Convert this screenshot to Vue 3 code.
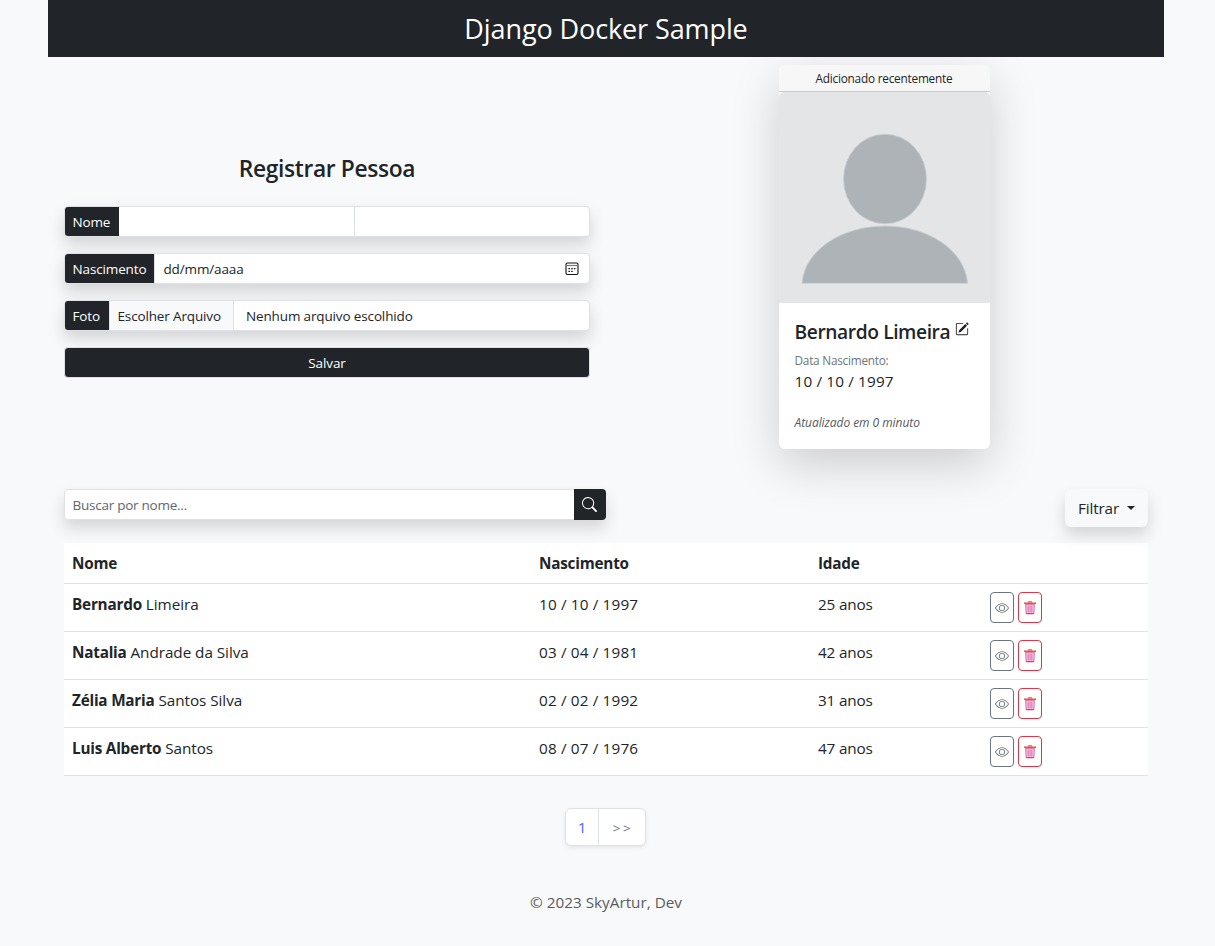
<script setup>
const people = [
  { first: 'Bernardo', last: 'Limeira', birth: '10 / 10 / 1997', age: '25 anos' },
  { first: 'Natalia', last: 'Andrade da Silva', birth: '03 / 04 / 1981', age: '42 anos' },
  { first: 'Zélia Maria', last: 'Santos Silva', birth: '02 / 02 / 1992', age: '31 anos' },
  { first: 'Luis Alberto', last: 'Santos', birth: '08 / 07 / 1976', age: '47 anos' },
]
</script>

<template>
  <div class="container">
    <header class="topbar"><span class="brand">Django Docker Sample</span></header>

    <section class="top">
      <form class="register" @submit.prevent>
        <h2>Registrar Pessoa</h2>
        <div class="group">
          <span class="tag">Nome</span>
          <span class="field half"></span>
          <span class="field half"></span>
        </div>
        <div class="group">
          <span class="tag t-birth">Nascimento</span>
          <span class="field date">
            <span>dd/mm/aaaa</span>
            <svg width="14" height="14" viewBox="0 0 14 14" fill="none" stroke="#111">
              <rect x="1" y="1" width="12" height="11.500" rx="1.500" stroke-width="1.100" />
              <path d="M1.500 3.500h11" stroke="#777" stroke-width="1.200" />
              <path d="M3.500 6.700h1.500M6.200 6.700h1.500M8.900 6.700h1.500M3.500 9.300h1.500M6.200 9.300h1.500" stroke-width="1.300" />
            </svg>
          </span>
        </div>
        <div class="group">
          <span class="tag t-photo">Foto</span>
          <span class="pick">Escolher Arquivo</span>
          <span class="field file"><span>Nenhum arquivo escolhido</span></span>
        </div>
        <button class="save">Salvar</button>
      </form>

      <div class="recent">
        <article class="card">
          <div class="card-head"><span>Adicionado recentemente</span></div>
          <div class="photo">
            <svg width="211" height="211" viewBox="0 0 211 211">
              <rect width="211" height="211" rx="5" fill="#e4e5e7" />
              <rect y="100" width="211" height="111" fill="#e4e5e7" />
              <g fill="#aeb3b7" stroke="#c9cfd2" stroke-width=".8">
                <ellipse cx="106" cy="87" rx="41.5" ry="44.8" />
                <path d="M23 191.300C25.500 158 63 134 106 134s80 24 82.500 57.300z" />
              </g>
            </svg>
          </div>
          <div class="card-body">
            <h5>
              <span>Bernardo Limeira</span>
              <svg width="14" height="14" viewBox="0 0 16 16" fill="#212529">
                <path d="M15.502 1.940a.5.5 0 0 1 0 .706L14.459 3.690l-2-2L13.502.646a.5.5 0 0 1 .707 0l1.293 1.293zm-1.750 2.456-2-2L4.939 9.210a.5.5 0 0 0-.121.196l-.805 2.414a.25.25 0 0 0 .316.316l2.414-.805a.5.5 0 0 0 .196-.120l6.813-6.814z" />
                <path d="M1 13.500A1.500 1.500 0 0 0 2.500 15h11a1.500 1.500 0 0 0 1.500-1.500v-6a.5.5 0 0 0-1 0v6a.5.5 0 0 1-.5.5h-11a.5.5 0 0 1-.5-.5v-11a.5.5 0 0 1 .5-.5H9a.5.5 0 0 0 0-1H2.500A1.500 1.500 0 0 0 1 2.500z" />
              </svg>
            </h5>
            <div class="lbl">Data Nascimento:</div>
            <div class="val">10 / 10 / 1997</div>
            <div class="upd">Atualizado em 0 minuto</div>
          </div>
        </article>
      </div>
    </section>

    <section class="tools">
      <div class="search">
        <span class="query">Buscar por nome...</span>
        <button class="go">
          <svg width="15" height="15" viewBox="0 0 16 16" fill="#fff">
            <path d="M11.742 10.344a6.500 6.500 0 1 0-1.397 1.398h-.001c.03.040.062.078.098.115l3.850 3.850a1 1 0 0 0 1.415-1.414l-3.850-3.850a1.007 1.007 0 0 0-.115-.100zM12 6.500a5.500 5.500 0 1 1-11 0 5.500 5.500 0 0 1 11 0" />
          </svg>
        </button>
      </div>
      <button class="filter"><span>Filtrar</span><i class="caret"></i></button>
    </section>

    <div class="table">
      <div class="row head"><span>Nome</span><span>Nascimento</span><span>Idade</span><span></span></div>
      <div v-for="p in people" :key="p.first" class="row">
        <span class="name"><b>{{ p.first }}</b> {{ p.last }}</span>
        <span class="num">{{ p.birth }}</span>
        <span>{{ p.age }}</span>
        <div class="acts">
          <button class="view">
            <svg width="14" height="14" viewBox="0 0 16 16" fill="#6c757d">
              <path d="M16 8s-3-5.500-8-5.500S0 8 0 8s3 5.500 8 5.500S16 8 16 8M1.173 8a13 13 0 0 1 1.660-2.043C4.120 4.668 5.880 3.500 8 3.500s3.879 1.168 5.168 2.457A13 13 0 0 1 14.828 8q-.086.130-.195.288c-.335.480-.830 1.120-1.465 1.755C11.879 11.332 10.119 12.500 8 12.500s-3.879-1.168-5.168-2.457A13 13 0 0 1 1.172 8z" />
              <path d="M8 5.500a2.500 2.500 0 1 0 0 5 2.500 2.500 0 0 0 0-5M4.500 8a3.500 3.500 0 1 1 7 0 3.500 3.500 0 0 1-7 0" />
            </svg>
          </button>
          <button class="del">
            <svg width="14" height="14" viewBox="0 0 14 14" fill="none">
              <path d="M3 4h8v8.500H3z" fill="#f3c6f0" />
              <path d="M5 .9h4" stroke="#dc3545" stroke-width="1" />
              <path d="M1 2.200h12" stroke="#dc3545" stroke-width="1.300" />
              <path d="M2.200 3.600h9.600" stroke="#e8707b" stroke-width="1" />
              <path d="M2.700 4l.5 8.600h7.600l.5-8.600" stroke="#e0688c" stroke-width="1" />
              <path d="M3.300 12.700h7.400" stroke="#dc3545" stroke-width="1" />
              <path d="M5.200 5v6.500M7 5v6.500M8.800 5v6.500" stroke="#d45aa5" stroke-width=".8" />
            </svg>
          </button>
        </div>
      </div>
    </div>

    <nav class="pager"><span class="cur">1</span><span class="next">&gt;&gt;</span></nav>
    <footer><span>© 2023 SkyArtur, Dev</span></footer>
  </div>
</template>

<style>
html, body { background: #f8f9fb; }
body { overflow: hidden; }
</style>

<style scoped>
* { box-sizing: border-box; }
.container {
  width: 1116px; height: 946px; margin-left: 48px;
  font-family: "Open Sans", "Noto Sans", sans-serif;
  font-size: 15.3px; line-height: 24px; color: #212529;
}
button { font: inherit; padding: 0; margin: 0; border: 0; }
h2, h5 { margin: 0; font-weight: 600; }
svg { display: block; flex: none; }
.topbar {
  height: 57px; background: #212529; color: #fff; position: relative; z-index: 2;
  display: flex; align-items: center; justify-content: center;
}
.brand { font-size: 27px; line-height: 42px; letter-spacing: -.1px; }
.top { display: flex; height: 424px; }
.register { width: 558px; padding: 92px 16px 0; }
h2 { font-size: 22.8px; line-height: 40px; text-align: center; margin-bottom: 17px; letter-spacing: -.35px; }
.group {
  display: flex; height: 31px; margin-bottom: 16px; border-radius: 4px; font-size: 13.5px;
  letter-spacing: -.14px;
  box-shadow: 0 8px 16px rgba(0, 0, 0, .15); background: #fff; border: 1px solid #dee2e6;
}
.tag {
  background: #212529; color: #fff; width: 54px; padding-left: 7.500px; line-height: 31px;
  border-radius: 3px 0 0 3px;
}
.t-birth { width: 89px; }
.t-photo { width: 44px; }
.field { flex: 1; display: flex; align-items: center; }
.half + .half { border-left: 1px solid #dee2e6; }
.date { padding: 0 10px 0 8.500px; justify-content: space-between; border-left: 1px solid #dee2e6; }
.pick {
  width: 125px; background: #f8f9fb; border-left: 1px solid #dee2e6; border-right: 1px solid #dee2e6;
  padding-left: 7.500px; line-height: 31px;
}
.file { padding-left: 12px; }
.save {
  display: block; width: 100%; height: 31px; background: #212529; color: #fff;
  border: 1px solid #dee2e6; border-radius: 4px; font-size: 13.5px; line-height: 31px; letter-spacing: -.1px;
}
.recent { width: 558px; padding: 8px 2px 0 0; display: flex; justify-content: center; align-items: flex-start; }
.card {
  width: 211px; height: 384px; background: #fff; border-radius: 6px; overflow: hidden;
  box-shadow: 0 16px 48px rgba(0, 0, 0, .175);
}
.card-head {
  height: 27px; background: #f7f7f7; border-bottom: 1px solid #c9cacb;
  text-align: center; font-size: 11.8px; line-height: 26px; letter-spacing: -.22px;
}
.photo { height: 211px; }
.card-body { padding: 16px 16px 0; }
h5 { display: flex; font-size: 19.2px; line-height: 26px; gap: 5px; white-space: nowrap; letter-spacing: -.4px; }
h5 svg { margin-top: 3px; }
.lbl { font-size: 11.8px; line-height: 18px; margin-top: 6px; color: #6c757d; letter-spacing: -.24px; }
.val { line-height: 24px; letter-spacing: .15px; }
.upd {
  font-size: 12px; line-height: 18px; margin-top: 21px; font-style: italic; color: #55595d;
  letter-spacing: -.06px;
}
.tools { display: flex; justify-content: space-between; height: 62px; padding: 8px 16px 0; }
.search { display: flex; width: 542px; height: 31px; border-radius: 4px; box-shadow: 0 8px 16px rgba(0, 0, 0, .15); }
.query {
  flex: 1; background: #fff; border: 1px solid #dee2e6; border-right: 0; border-radius: 4px 0 0 4px;
  padding-left: 7.500px; font-size: 13.5px; line-height: 30px; color: #62676c; letter-spacing: -.25px;
}
.go {
  width: 32px; background: #212529; border-radius: 0 4px 4px 0;
  display: flex; align-items: center; justify-content: center; padding-right: 1px;
}
.filter {
  width: 83px; height: 38px; background: #f8f9fb; border-radius: 6px; color: #212529;
  display: flex; align-items: center; padding-left: 13px; gap: 8px; letter-spacing: -.15px;
  box-shadow: 0 8px 16px rgba(0, 0, 0, .15); position: relative;
}
.caret { border: 4.500px solid transparent; border-top-color: #212529; border-bottom: 0; }
.table { margin: 0 16px; background: #fff; }
.row {
  display: grid; grid-template-columns: 467px 279px 172px 1fr; height: 48px;
  padding: 8px 0 0 8px; border-bottom: 1px solid #dee2e6; line-height: 24px; letter-spacing: -.18px;
}
.name { letter-spacing: -.06px; }
.row b { letter-spacing: -.22px; }
.row .num { letter-spacing: .15px; }
.head { height: 41px; font-weight: 700; letter-spacing: -.22px; }
.acts { display: flex; gap: 4px; }
.acts button {
  width: 24px; height: 31px; background: none; border: 1px solid #6c757d; border-radius: 4px;
  display: flex; align-items: center; justify-content: center;
}
.acts .del { border-color: #dc3545; }
.pager {
  width: 81px; height: 38px; margin: 32px 0 0 517px; border: 1px solid #dee2e6; border-radius: 6px;
  background: #fff; display: flex; line-height: 36px; text-align: center;
  box-shadow: 0 2px 4px rgba(0, 0, 0, .075);
}
.cur { width: 33px; color: #3f6dfd; border-right: 1px solid #dee2e6; }
.next { flex: 1; color: #6c757d; font-size: 13.5px; line-height: 38px; letter-spacing: 2.500px; padding-left: 2px; }
footer { margin-top: 44px; text-align: center; color: #595c5f; }
</style>
